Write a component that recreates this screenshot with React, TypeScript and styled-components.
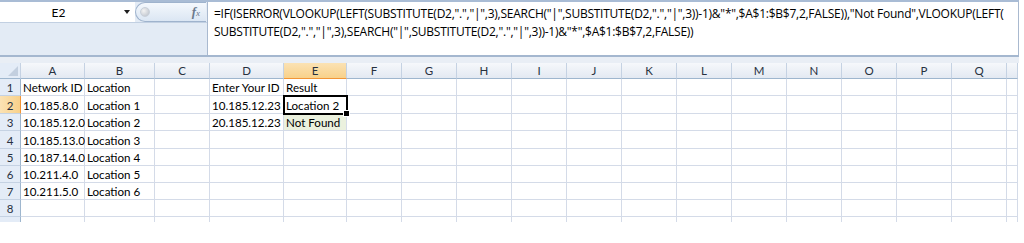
import React from "react";
import styled, { createGlobalStyle, css } from "styled-components";

const GlobalStyle = createGlobalStyle`
  html, body {
    margin: 0;
    padding: 0;
    background: #ffffff;
  }
  body {
    font-family: Lato, "Open Sans", sans-serif;
    overflow: hidden;
  }
`;

const FORMULA_LINES = [
  '=IF(ISERROR(VLOOKUP(LEFT(SUBSTITUTE(D2,".","|",3),SEARCH("|",SUBSTITUTE(D2,".","|",3))-1)&"*",$A$1:$B$7,2,FALSE)),"Not Found",VLOOKUP(LEFT(',
  'SUBSTITUTE(D2,".","|",3),SEARCH("|",SUBSTITUTE(D2,".","|",3))-1)&"*",$A$1:$B$7,2,FALSE))',
];

const COLUMNS = ["A", "B", "C", "D", "E", "F", "G", "H", "I", "J", "K", "L", "M", "N", "O", "P", "Q"];
const ROW_HEIGHTS = [17, 18, 17, 18, 17, 17, 17, 17, 17];

type CellData = { text?: string; found?: boolean };

const DATA: Record<number, Record<string, CellData>> = {
  1: { A: { text: "Network ID" }, B: { text: "Location" }, D: { text: "Enter Your ID" }, E: { text: "Result" } },
  2: { A: { text: "10.185.8.0" }, B: { text: "Location 1" }, D: { text: "10.185.12.23" }, E: { text: "Location 2" } },
  3: { A: { text: "10.185.12.0" }, B: { text: "Location 2" }, D: { text: "20.185.12.23" }, E: { text: "Not Found", found: true } },
  4: { A: { text: "10.185.13.0" }, B: { text: "Location 3" } },
  5: { A: { text: "10.187.14.0" }, B: { text: "Location 4" } },
  6: { A: { text: "10.211.4.0" }, B: { text: "Location 5" } },
  7: { A: { text: "10.211.5.0" }, B: { text: "Location 6" } },
};

const ACTIVE_COL = "E";
const ACTIVE_ROW = 2;

const App = () => {
  return (
    <>
      <GlobalStyle />
      <Window>
        <FormulaBar>
          <LeftPane>
            <NameRow>
              <NameBox>
                <NameText>E2</NameText>
                <DropArrow />
              </NameBox>
              <FxPill>
                <PillDot />
                <FxLabel>
                  <i>f</i>
                  <small>x</small>
                </FxLabel>
              </FxPill>
            </NameRow>
          </LeftPane>
          <FormulaInput>
            {FORMULA_LINES.map((line) => (
              <FormulaLine key={line}>{line}</FormulaLine>
            ))}
          </FormulaInput>
        </FormulaBar>
        <Splitter />
        <Sheet>
          <Corner />
          {COLUMNS.map((c) => (
            <ColHeader key={c} $active={c === ACTIVE_COL}>
              {c}
            </ColHeader>
          ))}
          <ColHeader $active={false} />
          {ROW_HEIGHTS.map((_, i) => {
            const row = i + 1;
            return (
              <React.Fragment key={row}>
                <RowHeader $active={row === ACTIVE_ROW}>{row}</RowHeader>
                {COLUMNS.map((c) => {
                  const cell = DATA[row]?.[c];
                  const selected = row === ACTIVE_ROW && c === ACTIVE_COL;
                  return (
                    <Cell key={c} $found={!!cell?.found} $selected={selected}>
                      {cell?.text}
                      {selected && <FillHandle />}
                    </Cell>
                  );
                })}
                <Cell $found={false} $selected={false} />
              </React.Fragment>
            );
          })}
        </Sheet>
      </Window>
    </>
  );
};

export default App;

const Window = styled.div`
  width: 1019px;
  display: flex;
  flex-direction: column;
`;

const FormulaBar = styled.div`
  display: flex;
  height: 53px;
  border-top: 2px solid #a9bcd5;
  background: #dfe8f3;
`;

const LeftPane = styled.div`
  width: 207px;
  display: flex;
  flex-direction: column;
  background: #e3ebf5;
`;

const NameRow = styled.div`
  display: flex;
  height: 20px;
  border-bottom: 1px solid #c2d0e2;
`;

const NameBox = styled.div`
  position: relative;
  width: 135px;
  display: flex;
  align-items: center;
  background: #ffffff;
`;

const NameText = styled.span`
  flex: 1;
  padding-right: 18px;
  text-align: center;
  font-size: 12px;
  color: #000000;
`;

const DropArrow = styled.span`
  position: absolute;
  right: 5px;
  top: 8px;
  border-left: 3px solid transparent;
  border-right: 3px solid transparent;
  border-top: 4px solid #1e1e1e;
`;

const FxPill = styled.div`
  flex: 1;
  display: flex;
  align-items: center;
  justify-content: space-between;
  padding: 0 6px 0 4px;
  margin-right: 1px;
  border: 1px solid #9fb3cd;
  border-right: none;
  border-radius: 10px 0 0 10px;
  background: linear-gradient(#f4f8fd, #dbe6f3);
`;

const PillDot = styled.span`
  width: 8px;
  height: 8px;
  border-radius: 50%;
  background: radial-gradient(circle at 35% 35%, #f3f3f3, #b8bec8);
  border: 1px solid #c9d0da;
`;

const FxLabel = styled.span`
  font-family: "Liberation Serif", serif;
  font-size: 13px;
  color: #6b7a8c;
  i {
    font-weight: bold;
  }
  small {
    font-style: italic;
    font-size: 9px;
  }
`;

const FormulaInput = styled.div`
  flex: 1;
  padding: 3px 0 0 6px;
  background: #ffffff;
  border-left: 1px solid #a9b9cf;
  border-right: 1px solid #a9b9cf;
`;

const FormulaLine = styled.div`
  height: 18px;
  line-height: 18px;
  font-family: "Open Sans", Lato, sans-serif;
  font-size: 12px;
  letter-spacing: -0.25px;
  white-space: nowrap;
  color: #000000;
`;

const Splitter = styled.div`
  height: 6px;
  border-top: 2px solid #a4b7cf;
  background: #e9eef5;
`;

const Sheet = styled.div`
  display: grid;
  grid-template-columns: 21px 64px 70px 55px 74px 63px repeat(12, 55px) 11px;
  grid-template-rows: 16px ${ROW_HEIGHTS.map((h) => `${h}px`).join(" ")};
  height: 159px;
  overflow: hidden;
`;

const headerBase = css`
  display: flex;
  align-items: center;
  justify-content: center;
  box-sizing: border-box;
  font-size: 11.5px;
  color: #27313f;
  border-right: 1px solid #c5d2e3;
  border-bottom: 1px solid #9eb6ce;
`;

const Corner = styled.div`
  position: relative;
  box-sizing: border-box;
  border-right: 1px solid #c5d2e3;
  border-bottom: 1px solid #9eb6ce;
  background: #e4ecf7;
  &::after {
    content: "";
    position: absolute;
    right: 2px;
    bottom: 2px;
    border-left: 10px solid transparent;
    border-bottom: 10px solid #c3cfdf;
  }
`;

const ColHeader = styled.div<{ $active: boolean }>`
  ${headerBase}
  background: ${(p) =>
    p.$active ? "linear-gradient(#fbe2b4, #f8d18a)" : "linear-gradient(#f6f8fb, #e3e9f2)"};
  border-bottom-color: ${(p) => (p.$active ? "#f29536" : "#9eb6ce")};
`;

const RowHeader = styled.div<{ $active: boolean }>`
  ${headerBase}
  padding-top: 1px;
  background: ${(p) => (p.$active ? "linear-gradient(90deg, #fbe2b4, #f8d18a)" : "#e4ecf7")};
  border-bottom-color: #c5d2e3;
  border-right-color: ${(p) => (p.$active ? "#f29536" : "#9eb6ce")};
`;

const Cell = styled.div<{ $found: boolean; $selected: boolean }>`
  position: relative;
  box-sizing: border-box;
  display: flex;
  align-items: flex-end;
  padding: 0 0 1px 2px;
  font-size: 11.6px;
  color: #000000;
  white-space: nowrap;
  border-right: 1px solid #d4dbe8;
  border-bottom: 1px solid #d4dbe8;
  background: ${(p) => (p.$found ? "#ebf1de" : "#ffffff")};
  ${(p) =>
    p.$selected &&
    css`
      outline: 2px solid #000000;
      outline-offset: -1px;
      z-index: 1;
    `}
`;

const FillHandle = styled.span`
  position: absolute;
  right: -4px;
  bottom: -4px;
  width: 5px;
  height: 5px;
  background: #000000;
  border: 1px solid #ffffff;
`;
